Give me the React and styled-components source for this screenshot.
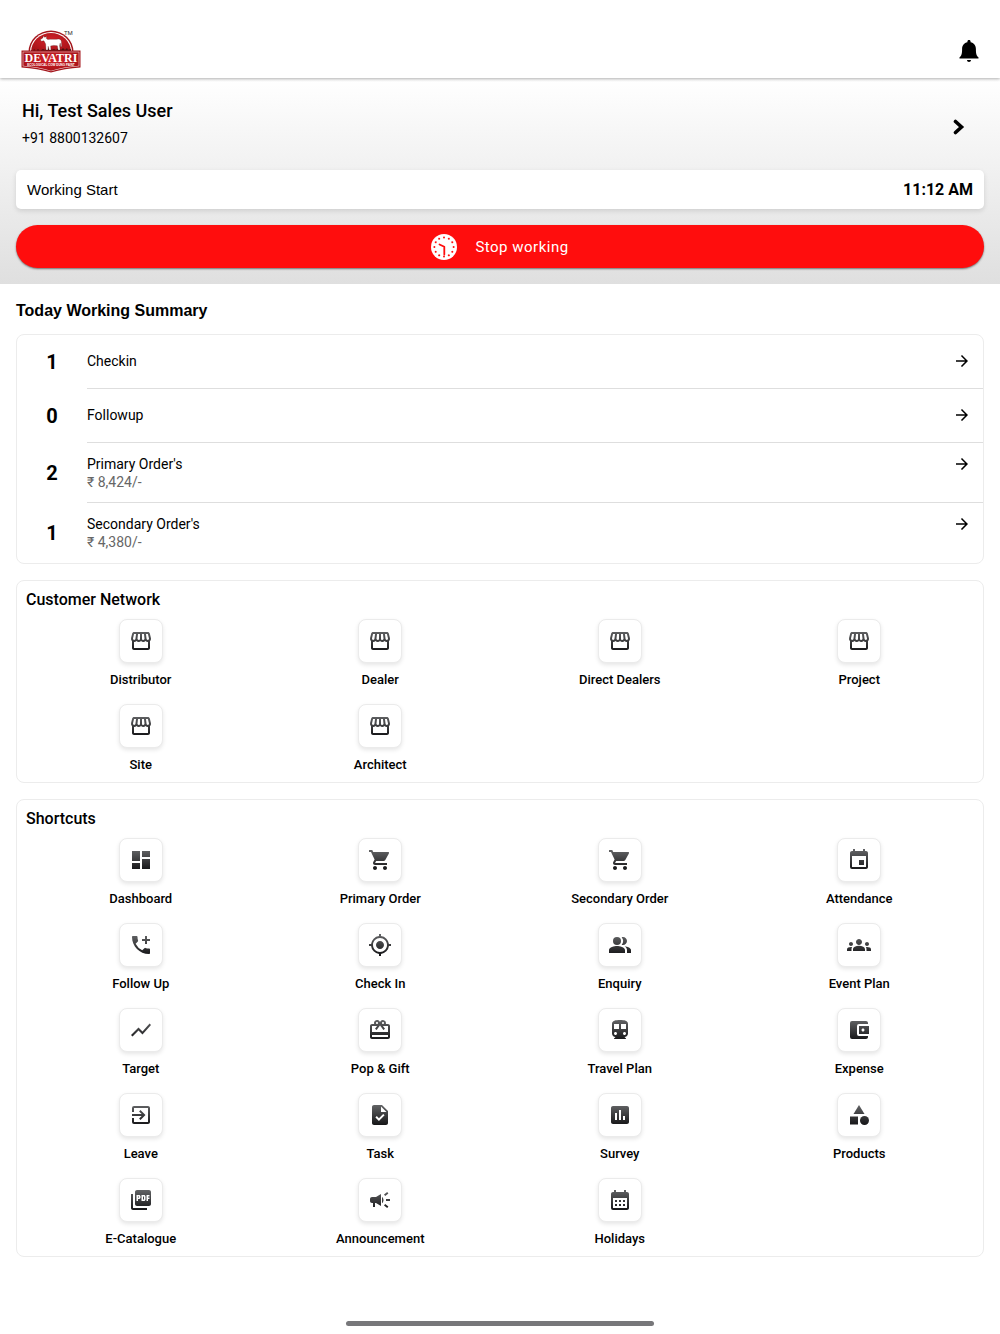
import React, { Fragment } from "react";
import styled, { createGlobalStyle } from "styled-components";
import {
  MdAccountBalanceWallet,
  MdAddIcCall,
  MdArrowForward,
  MdAssessment,
  MdCalendarMonth,
  MdCampaign,
  MdCardGiftcard,
  MdCategory,
  MdDashboard,
  MdDirectionsTransit,
  MdEvent,
  MdExitToApp,
  MdGroups,
  MdMyLocation,
  MdOutlineStorefront,
  MdPeopleAlt,
  MdPictureAsPdf,
  MdShoppingCart,
  MdShowChart,
  MdTask,
} from "react-icons/md";

const summary = [
  { count: 1, title: "Checkin" },
  { count: 0, title: "Followup" },
  { count: 2, title: "Primary Order's", amount: "₹ 8,424/-" },
  { count: 1, title: "Secondary Order's", amount: "₹ 4,380/-" },
];

const network = [
  { label: "Distributor", icon: MdOutlineStorefront },
  { label: "Dealer", icon: MdOutlineStorefront },
  { label: "Direct Dealers", icon: MdOutlineStorefront },
  { label: "Project", icon: MdOutlineStorefront },
  { label: "Site", icon: MdOutlineStorefront },
  { label: "Architect", icon: MdOutlineStorefront },
];

const shortcuts = [
  { label: "Dashboard", icon: MdDashboard },
  { label: "Primary Order", icon: MdShoppingCart },
  { label: "Secondary Order", icon: MdShoppingCart },
  { label: "Attendance", icon: MdEvent },
  { label: "Follow Up", icon: MdAddIcCall },
  { label: "Check In", icon: MdMyLocation },
  { label: "Enquiry", icon: MdPeopleAlt },
  { label: "Event Plan", icon: MdGroups },
  { label: "Target", icon: MdShowChart },
  { label: "Pop & Gift", icon: MdCardGiftcard },
  { label: "Travel Plan", icon: MdDirectionsTransit },
  { label: "Expense", icon: MdAccountBalanceWallet },
  { label: "Leave", icon: MdExitToApp },
  { label: "Task", icon: MdTask },
  { label: "Survey", icon: MdAssessment },
  { label: "Products", icon: MdCategory },
  { label: "E-Catalogue", icon: MdPictureAsPdf },
  { label: "Announcement", icon: MdCampaign },
  { label: "Holidays", icon: MdCalendarMonth },
];

const Logo = () => (
  <svg width='60' height='44' viewBox='0 0 60 44' role='img' aria-label='Devatri'>
    <defs>
      <radialGradient id='logoRed' cx='0.5' cy='0.4' r='0.6'>
        <stop offset='0' stopColor='#d5222a' />
        <stop offset='1' stopColor='#a81218' />
      </radialGradient>
    </defs>
    <path d='M7.500 23a22.500 21.500 0 0 1 45 0z' fill='#a3151b' />
    <path d='M9 23a21 20 0 0 1 42 0z' fill='#fff' />
    <path d='M10 23a20 19 0 0 1 40 0z' fill='url(#logoRed)' />
    <path
      d='M10 23v-2l2 1 1-2 2 2 2-2 2 2 3-2 2 1 3-2 3 2 3-1 2 1 3-2 2 2 2-2 2 2 2-2 1 2 3-1v3z'
      fill='#4a1010'
    />
    <path
      d='M22 7l1.800 1.200 2.200-.7-.8 1.700 1.600 1.300c3.500-.6 7 .2 10.700-.5 1.700 0 2.700.9 2.900 2.500l.3 5-.9.200-.6-3.600-.6 2.600.5 4.300h-2l-.8-4.200-3.600-.4-3 .5.300 4.100h-1.900l-.9-3.700-.3 3.700h-1.900l-.4-6-1.700-3.200-2.600.4-1-1.500 2.700-2z'
      fill='#fff'
      stroke='#401010'
      strokeWidth='0.3'
    />
    <path d='M.5 21.500h59v17q-16 1-29.500 5-13.500-4-29.500-5z' fill='#a3151b' />
    <path d='M1.700 22.700h56.600v14.600q-15 1-28.300 5-13.300-4-28.300-5z' fill='#f3d9d9' />
    <path d='M2.300 23.300h55.400v13.500q-15 1-27.700 4.900-12.700-3.900-27.700-4.900z' fill='url(#logoRed)' />
    <text
      x='30'
      y='33'
      textAnchor='middle'
      fontFamily='"Liberation Serif", serif'
      fontWeight='700'
      fontSize='12'
      fill='#fff'>
      DEVATRI
    </text>
    <text
      x='30'
      y='36.500'
      textAnchor='middle'
      fontFamily='"Liberation Sans", sans-serif'
      fontWeight='700'
      fontSize='3'
      fill='#fff'>
      ECOLOGICAL COW DUNG PAINT
    </text>
    <text x='43' y='6' fontFamily='Roboto, sans-serif' fontSize='6' fill='#333'>
      TM
    </text>
  </svg>
);

const BellIcon = () => (
  <svg width='20' height='24' viewBox='0 0 20 24' aria-hidden='true'>
    <path
      d='M10 1c1 0 1.600.7 1.600 1.700v.6c3.200.7 5.300 3.300 5.300 6.700 0 4.600.5 6.700 2.600 8.500.3.300.1 1-.4 1H.9c-.5 0-.7-.7-.4-1C2.600 16.700 3.100 14.600 3.100 10c0-3.400 2.100-6 5.300-6.700v-.6C8.400 1.700 9 1 10 1z'
      fill='#000'
    />
    <path d='M8 21h4c0 1.200-.9 2-2 2s-2-.8-2-2z' fill='#000' />
  </svg>
);

const ChevronIcon = () => (
  <svg width='12' height='16' viewBox='0 0 12 16' aria-hidden='true'>
    <path
      d='M2.500 2.500l6 5.500-6 5.500'
      fill='none'
      stroke='#000'
      strokeWidth='3.6'
      strokeLinecap='round'
      strokeLinejoin='miter'
    />
  </svg>
);

// white dial, marks and hands in the button colour
const ClockIcon = () => (
  <svg width='26' height='26' viewBox='0 0 26 26' aria-hidden='true'>
    <circle cx='13' cy='13' r='13' fill='#fff' />
    {[0, 30, 60, 90, 120, 150, 180, 210, 240, 270, 300, 330].map((angle) => (
      <circle
        key={angle}
        cx='13'
        cy='3.4'
        r='1'
        fill='#ff0d0d'
        transform={`rotate(${angle} 13 13)`}
      />
    ))}
    <path
      d='M8.500 10.500l4.800 2.300v7.700'
      fill='none'
      stroke='#ff0d0d'
      strokeWidth='1.800'
      strokeLinecap='round'
      strokeLinejoin='round'
    />
  </svg>
);

const TileSection = ({ title, items }) => (
  <Card>
    <CardTitle>{title}</CardTitle>
    <TileGrid>
      {items.map(({ label, icon: Icon }) => (
        <Tile key={label} type='button'>
          <TileIcon>
            <Icon size={24} aria-hidden='true' />
          </TileIcon>
          {label}
        </Tile>
      ))}
    </TileGrid>
  </Card>
);

const App = () => {
  return (
    <Fragment>
      <GlobalStyle />
      <IconInk width='0' height='0' aria-hidden='true'>
        <linearGradient id='ink' gradientUnits='userSpaceOnUse' x1='0' y1='2' x2='0' y2='22'>
          <stop offset='0' stopColor='#626365' />
          <stop offset='1' stopColor='#151517' />
        </linearGradient>
      </IconInk>
      <Page>
        <Header>
          <Logo />
          <IconButton type='button' aria-label='Notifications'>
            <BellIcon />
          </IconButton>
        </Header>
        <Profile>
          <UserLink href='#profile'>
            <div>
              <UserName>Hi, Test Sales User</UserName>
              <UserPhone>+91 8800132607</UserPhone>
            </div>
            <ChevronIcon />
          </UserLink>
          <WorkingBar>
            <span>Working Start</span>
            <WorkingTime>11:12 AM</WorkingTime>
          </WorkingBar>
          <StopButton type='button'>
            <ClockIcon />
            Stop working
          </StopButton>
        </Profile>
        <Content>
          <SectionTitle>Today Working Summary</SectionTitle>
          <CardList>
            <Card>
              {summary.map(({ count, title, amount }) => (
                <SummaryRow key={title} href='#summary'>
                  <Count>{count}</Count>
                  <SummaryBody $tall={Boolean(amount)}>
                    <div>
                      <SummaryTitle>{title}</SummaryTitle>
                      {amount && <Amount>{amount}</Amount>}
                    </div>
                    <MdArrowForward size={18} aria-hidden='true' />
                  </SummaryBody>
                </SummaryRow>
              ))}
            </Card>
            <TileSection title='Customer Network' items={network} />
            <TileSection title='Shortcuts' items={shortcuts} />
          </CardList>
        </Content>
        <HomeIndicator />
      </Page>
    </Fragment>
  );
};

export default App;

const GlobalStyle = createGlobalStyle`
  * {
    box-sizing: border-box;
  }
  body {
    margin: 0;
    background: #fff;
    color: #000;
    font-family: Roboto, sans-serif;
    font-size: 14px;
  }
  button {
    border: 0;
    padding: 0;
    background: none;
    color: inherit;
    font: inherit;
    cursor: pointer;
  }
  a {
    color: inherit;
    text-decoration: none;
  }
  svg {
    display: block;
    flex: none;
  }
`;

const IconInk = styled.svg`
  position: absolute;
`;

const Page = styled.div`
  min-height: 100vh;
  display: flex;
  flex-direction: column;
`;

//top bar:

const Header = styled.header`
  display: flex;
  align-items: center;
  justify-content: space-between;
  padding: 29px 21px 5px;
  background: #fff;
  box-shadow: 0 1px 3px rgba(0, 0, 0, 0.32);
  z-index: 1;
`;

const IconButton = styled.button`
  display: flex;
`;

//user and working time:

const Profile = styled.section`
  display: flex;
  flex-direction: column;
  gap: 16px;
  padding: 21px 16px 16px;
  background: linear-gradient(#fff, #dfdfdf);
`;

const UserLink = styled.a`
  display: flex;
  align-items: center;
  justify-content: space-between;
  padding: 0 19px 0 6px;
`;

const UserName = styled.h1`
  margin: 0 0 6px;
  font-size: 18px;
  font-weight: 500;
  line-height: 24px;
`;

const UserPhone = styled.div`
  padding-bottom: 7px;
  font-size: 14px;
  line-height: 18px;
`;

const WorkingBar = styled.div`
  display: flex;
  align-items: center;
  justify-content: space-between;
  height: 39px;
  padding: 0 11px;
  border-radius: 5px;
  background: #fff;
  box-shadow: 0 2px 5px rgba(0, 0, 0, 0.12);
  font-family: "Liberation Sans", sans-serif;
  font-size: 15px;
`;

const WorkingTime = styled.span`
  font-family: Roboto, sans-serif;
  font-size: 16px;
  font-weight: 700;
`;

const StopButton = styled.button`
  display: flex;
  align-items: center;
  justify-content: center;
  gap: 18px;
  height: 43px;
  border-radius: 22px;
  background: #ff0d0d;
  box-shadow: 0 1px 2px rgba(0, 0, 0, 0.5);
  color: #fff;
  font-size: 15px;
  letter-spacing: 0.5px;
`;

//cards:

const Content = styled.main`
  padding: 17px 16px;
`;

const SectionTitle = styled.h2`
  margin: 0 0 13px;
  font-family: "Liberation Sans", sans-serif;
  font-size: 16px;
  font-weight: 700;
  line-height: 20px;
`;

const CardList = styled.div`
  display: flex;
  flex-direction: column;
  gap: 16px;
`;

const Card = styled.section`
  border: 1px solid #ececec;
  border-radius: 8px;
`;

const SummaryRow = styled.a`
  display: flex;
  align-items: center;
  &:last-child > div {
    border-color: transparent;
  }
`;

const Count = styled.span`
  width: 70px;
  text-align: center;
  font-size: 20px;
  font-weight: 700;
`;

const SummaryBody = styled.div`
  flex: 1;
  display: flex;
  justify-content: space-between;
  height: ${({ $tall }) => ($tall ? "60px" : "54px")};
  padding: ${({ $tall }) => ($tall ? "12px" : "17px")} 12px 0 0;
  border-bottom: 1px solid #dedede;
`;

const SummaryTitle = styled.div`
  font-size: 14px;
  line-height: 18px;
`;

const Amount = styled.div`
  color: #666;
  font-size: 14px;
  line-height: 18px;
`;

const CardTitle = styled.h2`
  margin: 0;
  padding: 9px;
  font-size: 16px;
  font-weight: 500;
  line-height: 20px;
`;

const TileGrid = styled.div`
  display: grid;
  grid-template-columns: repeat(4, 1fr);
  row-gap: 15px;
  padding: 0 4px 8px;
`;

const Tile = styled.button`
  display: flex;
  flex-direction: column;
  align-items: center;
  gap: 8px;
  font-size: 13px;
  font-weight: 500;
  line-height: 18px;
`;

const TileIcon = styled.span`
  display: flex;
  align-items: center;
  justify-content: center;
  width: 44px;
  height: 44px;
  border: 1px solid #ebebeb;
  border-radius: 8px;
  background: #fff;
  box-shadow: 0 2px 4px rgba(0, 0, 0, 0.1);
  svg {
    fill: url(#ink);
  }
`;

const HomeIndicator = styled.div`
  width: 308px;
  height: 5px;
  margin: auto auto 8px;
  border-radius: 3px;
  background: #77777a;
`;
